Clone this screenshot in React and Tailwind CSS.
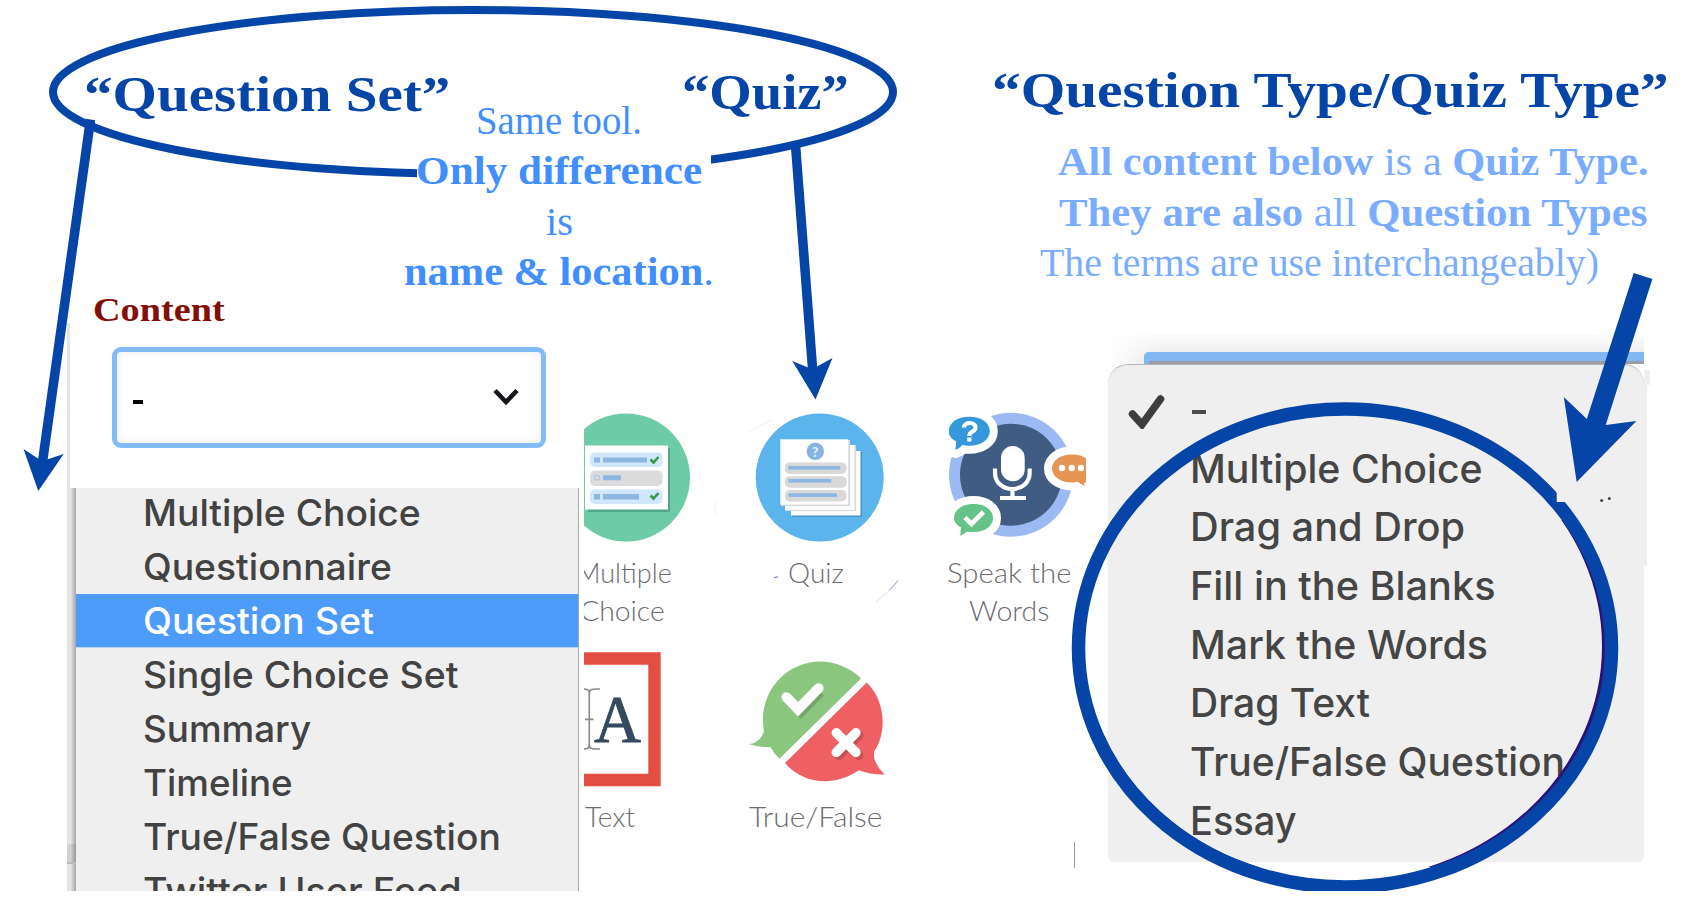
import { useLayoutEffect, useRef, useState } from "react";

// One line of text, stretched or condensed to fill the width of its box.
function Fit({ className = "", children }) {
  const box = useRef(null);
  const text = useRef(null);
  const [scale, setScale] = useState(1);
  useLayoutEffect(() => {
    setScale(box.current.clientWidth / text.current.offsetWidth);
  }, []);
  return (
    <div ref={box} className={`whitespace-nowrap ${className}`}>
      <span ref={text} className="inline-block origin-left" style={{ transform: `scaleX(${scale})` }}>
        {children}
      </span>
    </div>
  );
}

const leftOptions = [
  { label: "Multiple Choice", width: "w-[278px]" },
  { label: "Questionnaire", width: "w-[249px]" },
  { label: "Question Set", width: "w-[231px]", active: true },
  { label: "Single Choice Set", width: "w-[316px]" },
  { label: "Summary", width: "w-[168px]" },
  { label: "Timeline", width: "w-[150px]" },
  { label: "True/False Question", width: "w-[358px]" },
  { label: "Twitter User Feed", width: "w-[319px]" },
];

const rightOptions = [
  { label: "Multiple Choice", width: "w-[293px]" },
  { label: "Drag and Drop", width: "w-[275px]" },
  { label: "Fill in the Blanks", width: "w-[305px]" },
  { label: "Mark the Words", width: "w-[298px]" },
  { label: "Drag Text", width: "w-[180px]" },
  { label: "True/False Question", width: "w-[375px]" },
  { label: "Essay", width: "w-[107px]" },
];

function Header() {
  return (
    <header className="flex h-[290px] items-start font-['Liberation_Serif',serif] text-[#0645a8]">
      <h1 className="mt-[69px] ml-[84px] text-[51px] leading-[50px] font-bold">
        <Fit className="w-[366px]">“Question Set”</Fit>
      </h1>
      <div className="mt-[96px] -ml-[45px] flex w-[308px] flex-col items-center text-[39px] leading-[50.3px] text-[#418eff]">
        <Fit className="w-[166px]">Same tool.</Fit>
        <Fit className="w-[286px] font-bold">Only difference</Fit>
        <Fit className="w-[27px]">is</Fit>
        <Fit className="w-[310px]">
          <b>name &amp; location</b>.
        </Fit>
      </div>
      <h1 className="mt-[67px] -ml-[31px] text-[51px] leading-[50px] font-bold">
        <Fit className="w-[167px]">“Quiz”</Fit>
      </h1>
      <div className="mt-[65px] ml-[143px] w-[676px]">
        <h1 className="text-[51px] leading-[50px] font-bold">
          <Fit className="w-[677px]">“Question Type/Quiz Type”</Fit>
        </h1>
        <div className="mt-[22px] text-[39px] leading-[50.5px] text-[#7aacff]">
          <Fit className="ml-[66px] w-[590px]">
            <b>All content below</b> is a <b>Quiz Type.</b>
          </Fit>
          <Fit className="ml-[67px] w-[588px]">
            <b>They are also</b> all <b>Question Types</b>
          </Fit>
          <Fit className="ml-[48px] w-[559px]">The terms are use interchangeably)</Fit>
        </div>
      </div>
    </header>
  );
}

function ContentPicker() {
  return (
    <section className="w-[584px] shrink-0">
      <h2 className="mt-[3px] ml-[93px] h-[30px] font-['Liberation_Serif',serif] text-[33px] leading-[34px] font-bold text-[#820e05]">
        <Fit className="w-[132px]">Content</Fit>
      </h2>
      <div className="ml-[67px] h-[165px] border-l-[3px] border-[#e4e4e4] pt-[24px] pl-[42px]">
        <div className="flex h-[101px] w-[434px] items-center justify-between rounded-[9px] border-[5px] border-[#82bbfa] pr-[21px] pl-[16px] shadow-[inset_0_0_8px_rgba(0,0,0,0.09)]">
          <span className="mt-[8px] h-[4px] w-[10px] bg-black" />
          <svg className="mb-[2px] h-[18px] w-[28px]" viewBox="0 0 28 18" fill="none">
            <path d="M3 2.500 L14 14 L25 2.500" stroke="#15151c" strokeWidth="4.600" />
          </svg>
        </div>
      </div>
      <div className="ml-[67px] flex h-[403px]">
        <div className="flex w-[9px] flex-col bg-linear-to-r from-[#e4e4e4] from-40% to-[#a6a6a6]">
          <div className="mt-[356px] h-[20px] border-b-2 border-[#b9b9bf] bg-black/8" />
        </div>
        <ul className="-mt-[2px] h-[405px] w-[503px] overflow-hidden border-r border-[#a8a8a8] bg-[#efefef] font-['Inter',sans-serif] text-[37px] font-[450] text-[#424242] [clip-path:inset(2px_0_0_0)]">
          {leftOptions.map((o) => (
            <li
              key={o.label}
              className={
                o.active
                  ? "h-[54px] border-b border-[#b9d7fb] bg-[#4d9cfb] pl-[67px] leading-[53px] text-white"
                  : "h-[54px] pl-[67px] leading-[53px]"
              }
            >
              <Fit className={o.width}>{o.label}</Fit>
            </li>
          ))}
        </ul>
      </div>
    </section>
  );
}

function MultipleChoiceIcon() {
  return (
    <svg className="block h-[140px] w-[110px]" viewBox="584 410 110 140">
      <circle cx="626" cy="477.500" r="64" fill="#6dcba8" />
      <rect x="588" y="448" width="82" height="64" fill="#4fa98a" />
      <rect x="585" y="445.500" width="83" height="64" fill="#fff" />
      <rect x="590" y="452.500" width="72.500" height="14.500" rx="5" fill="#cfe6fb" />
      <rect x="590" y="470.500" width="72.500" height="15.500" rx="5" fill="#dbdbdb" />
      <rect x="590" y="489.500" width="72.500" height="14.500" rx="5" fill="#cfe6fb" />
      <g fill="#8db6e2">
        <rect x="594" y="457.500" width="6" height="5" />
        <rect x="603" y="457.500" width="44" height="5" />
        <rect x="603" y="475.300" width="18" height="5" />
        <rect x="594" y="494" width="6" height="5.500" />
        <rect x="603" y="494" width="36" height="5.500" />
      </g>
      <rect x="594.700" y="475.600" width="4.600" height="4.200" fill="none" stroke="#a9c8e8" />
      <path d="M650.500 459.500l3 3 5-5.500M650.500 495.500l3 3 5-5.500" fill="none" stroke="#3a9a44" strokeWidth="2.600" />
    </svg>
  );
}

function QuizIcon() {
  return (
    <svg className="block h-[140px] w-[140px]" viewBox="746 410 140 140">
      <circle cx="819.700" cy="477.500" r="64" fill="#5cb4ed" />
      <rect x="792" y="452" width="70" height="65" fill="#4693c6" />
      <rect x="791" y="451" width="69.500" height="64.500" fill="#fbfbfb" />
      <rect x="785" y="445" width="71" height="66" fill="#d4d8db" />
      <rect x="785" y="445" width="69.500" height="65" fill="#fbfbfb" />
      <rect x="781" y="440" width="69" height="66" fill="#d4d8db" />
      <rect x="780.300" y="439.300" width="68" height="65.300" fill="#fff" />
      <circle cx="815.300" cy="451.300" r="8.700" fill="#86b4e2" />
      <text x="815.300" y="456.500" textAnchor="middle" fontFamily="Lato, sans-serif" fontWeight="700" fontSize="14" fill="#e8f2fc">?</text>
      <g fill="#d9d9d9">
        <rect x="784.700" y="462.500" width="62" height="11.500" rx="5" />
        <rect x="784.700" y="476.200" width="62" height="11.500" rx="5" />
        <rect x="784.700" y="490" width="62" height="11.500" rx="5" />
      </g>
      <g fill="#8db6e2">
        <rect x="788.300" y="466" width="52" height="3.600" />
        <rect x="788.300" y="479" width="43" height="3.600" />
        <rect x="788.300" y="493.300" width="48.500" height="3.600" />
      </g>
      <path d="M750 432q10-8 22-12" fill="none" stroke="#efeff2" />
    </svg>
  );
}

function SpeakIcon() {
  return (
    <svg className="block h-[140px] w-[146px]" viewBox="940 410 146 140">
      <circle cx="1011" cy="474.700" r="62" fill="#9bb9f3" />
      <circle cx="1011" cy="474.700" r="51" fill="#405c82" />
      <rect x="1001" y="446" width="23.700" height="35.300" rx="11.800" fill="#fff" />
      <path d="M995 468.500v4c0 22 34.700 22 34.700 0v-4M1012.500 489v8M1000 498h26" fill="none" stroke="#fff" strokeWidth="4.200" />
      <g stroke="#fff" strokeWidth="16" strokeLinejoin="round" fill="#fff">
        <path d="M969.300 416.800c12 0 20.500 6 20.500 14.500s-9 14.500-20.500 14.500c-3 0-5-.3-7-.8q-3 4-7 5l1-8.500c-5-2.500-7.500-6-7.500-10.200 0-8.500 8.500-14.500 20.500-14.500z" />
        <path d="M973.500 504c11.500 0 19.500 6 19.500 14s-8 14-19.500 14c-2.500 0-5 0-7-.6q-2.500 3.300-6.300 4.400l.8-8.400c-4.500-2.500-7-5.500-7-9.400 0-8 8-14 19.500-14z" />
        <path d="M1072 454.500c11 0 20 6 20 14 0 3-1.500 6-4 8l-3.500 9.500q-4-2-7-4.200c-2 .4-3.500.7-5.500.7-11.500 0-20-6-20-14s8.500-14 20-14z" />
      </g>
      <path fill="#3598db" d="M969.300 416.800c12 0 20.500 6 20.500 14.500s-9 14.500-20.500 14.500c-3 0-5-.3-7-.8q-3 4-7 5l1-8.500c-5-2.500-7.500-6-7.500-10.200 0-8.500 8.500-14.500 20.500-14.500z" />
      <path fill="#65c289" d="M973.500 504c11.500 0 19.500 6 19.500 14s-8 14-19.500 14c-2.500 0-5 0-7-.6q-2.500 3.300-6.300 4.400l.8-8.400c-4.500-2.500-7-5.500-7-9.400 0-8 8-14 19.500-14z" />
      <path fill="#e59553" d="M1072 454.500c7 0 12 2 15 4.500v23q-1.500.5-3 .8l.6 3.200q-4-2-7-4.200c-2 .4-3.500.7-5.600.7-11.500 0-20-6-20-14s8.500-14 20-14z" />
      <path d="M964 427.500c0-6 11.500-6 11.500.2 0 4.300-6.200 3.300-6.200 8.300M969.300 437.500v4" fill="none" stroke="#fff" strokeWidth="4.200" />
      <path d="M965 517.500l6.500 6.500 12-12" fill="none" stroke="#fff" strokeWidth="4.600" />
      <g fill="#fff">
        <circle cx="1062" cy="468" r="3.200" />
        <circle cx="1071.700" cy="468" r="3.200" />
        <circle cx="1081" cy="468" r="3.200" />
      </g>
    </svg>
  );
}

function TextIcon() {
  return (
    <svg className="block h-[140px] w-[100px]" viewBox="584 650 100 140">
      <path d="M578 658.500h76.500v121.500h-76.500" fill="none" stroke="#e44d42" strokeWidth="12.400" />
      <path d="M582 689c4 0 7.300 0 7.300 4v52c0 4-3.300 4-7.300 4M600 689h-3c-4 0-7.700 0-7.700 4v52c0 4 3.700 4 7.700 4h3M585 719.300h8.500" fill="none" stroke="#8c8c8c" strokeWidth="1.700" />
      <text x="594" y="741.500" fontFamily="'Liberation Serif', serif" fontSize="68" textLength="47" lengthAdjust="spacingAndGlyphs" fill="#34495e" stroke="#34495e" strokeWidth="0.900">A</text>
    </svg>
  );
}

function TrueFalseIcon() {
  return (
    <svg className="block h-[140px] w-[140px]" viewBox="746 650 140 140">
      <path fill="#8bc67f" d="M861 678.500L779.500 758.700Q773.500 753.500 770.500 747Q759 747.500 749.300 744.300Q761 742 764 731C757 692 787 661.500 820 661.500C836 661.500 852 669 861 678.500z" />
      <path fill="#ee6063" d="M866.700 682.500C884 699 888.500 730 874 752V757Q876 766 884.500 774.800Q869 774.500 859 770.300C833 787.500 803 784 785 763z" />
      <path d="M790.500 701l10.500 11.300 19.500-20" fill="none" stroke="#74a66a" strokeWidth="9.500" />
      <path d="M839 735.500l20 20m0-20l-20 20" stroke="#c94f54" strokeWidth="9" strokeLinecap="round" />
      <path d="M786.500 697.200l11.500 12 20.500-21" fill="none" stroke="#fff" strokeWidth="10" strokeLinecap="round" />
      <path d="M836.300 732.800l19.600 19.600m0-19.600l-19.600 19.600" stroke="#fff" strokeWidth="9.500" strokeLinecap="round" />
    </svg>
  );
}

function ToolIcons() {
  return (
    <section className="mt-[120px] grid w-[524px] shrink-0 grid-cols-[162px_194px_168px] content-start font-['Lato',sans-serif] text-[27px] leading-[38px] font-light text-[#6c6c70]">
      <div className="h-[240px] overflow-hidden">
        <MultipleChoiceIcon />
        <div className="mt-[4px]">
          <Fit className="-ml-[8px] w-[96px]">Multiple</Fit>
          <Fit className="-ml-[4px] w-[85px]">Choice</Fit>
        </div>
      </div>
      <div>
        <QuizIcon />
        <Fit className="mt-[4px] ml-[42px] w-[56px]">Quiz</Fit>
      </div>
      <div>
        <SpeakIcon />
        <div className="mt-[4px]">
          <Fit className="ml-[7px] w-[125px]">Speak the</Fit>
          <Fit className="ml-[29px] w-[80px]">Words</Fit>
        </div>
      </div>
      <div>
        <TextIcon />
        <Fit className="mt-[8px] ml-[1px] w-[50px]">Text</Fit>
      </div>
      <div>
        <TrueFalseIcon />
        <Fit className="mt-[8px] ml-[3px] w-[133px]">True/False</Fit>
      </div>
    </section>
  );
}

function QuestionTypeMenu() {
  return (
    <section className="mt-[44px] w-[542px] shrink-0">
      <div className="flex h-[30px] w-[536px] items-end justify-end bg-[linear-gradient(to_right,white,transparent_10%),linear-gradient(#fcfcfc,#e6e6e6)]">
        <div className="h-[12px] w-[500px] rounded-tl-[5px] border-t-[9px] border-l-[5px] border-[#82b8f1] bg-[#999da3]" />
      </div>
      <div className="flex">
        <ul className="h-[498px] w-[536px] rounded-t-[20px] rounded-b-[6px] border-t border-[#b5b5b5] bg-[#efefef] pt-[16px] font-['Inter',sans-serif] text-[39px] font-[450] text-[#454545]">
          <li className="flex h-[58.7px] items-center pl-[20px]">
            <svg className="h-[38px] w-[40px]" viewBox="1128 392 40 38" fill="none">
              <path d="M1132.500 415l9.500 10.500 18.500-25.500" stroke="#3e3e3e" strokeWidth="7.500" strokeLinecap="round" />
            </svg>
            <span className="mt-[3px] ml-[24px] h-[4px] w-[14px] bg-[#4a4a4a]" />
          </li>
          {rightOptions.map((o) => (
            <li key={o.label} className="h-[58.7px] pl-[82px] leading-[57px]">
              <Fit className={o.width}>{o.label}</Fit>
            </li>
          ))}
        </ul>
        <div className="mt-[6px] h-[15px] w-[6px] bg-[#efefef]" />
        <div className="mt-[21px] -ml-[6px] h-[181px] w-[3px] bg-[#efefef]" />
      </div>
    </section>
  );
}

function Annotations() {
  return (
    <svg className="pointer-events-none absolute top-0 left-0 h-[891px] w-[1692px]" viewBox="0 0 1692 891" fill="none">
      <defs>
        <clipPath id="ring">
          <path d="M0 0h1692v140H0zM0 140h417v60H0zM711 140h300v60H711z" />
        </clipPath>
        <clipPath id="inner">
          <path d="M1100 520h520v347h-520z" />
        </clipPath>
      </defs>
      <ellipse cx="473" cy="92" rx="420" ry="82" stroke="#0645a8" strokeWidth="8" clipPath="url(#ring)" />
      <path d="M90.500 119.500L42.500 462" stroke="#0645a8" strokeWidth="9.500" />
      <path d="M38.300 491L23.500 449L38 458.500L47 459.500L63.700 454z" fill="#0645a8" />
      <path d="M795.500 145L812.500 368" stroke="#0645a8" strokeWidth="9.500" />
      <path d="M815.500 399.500L792.300 361L808 367.500L817 366.500L832.500 358z" fill="#0645a8" />
      <ellipse cx="1343" cy="646" rx="261.500" ry="236.500" stroke="#2c1277" strokeWidth="5" clipPath="url(#inner)" />
      <ellipse cx="1345" cy="648" rx="266.500" ry="239" stroke="#0645a8" strokeWidth="13.500" />
      <path d="M1556.700 484h14v18h-14z" fill="#efefef" />
      <path d="M1633.700 273L1652.400 279L1605.700 425L1636.400 421L1576.700 482L1563.800 397L1586.800 419z" fill="#0645a8" />
      <path d="M1074.500 842v26" stroke="#999" />
      <path d="M774 577.500l4-.6" stroke="#5a3f8f" strokeOpacity="0.800" />
      <path d="M876 602Q888 593 898 580.500" stroke="#e2dfec" />
      <path d="M889 590.500Q894 586 898 580.500" stroke="#a49ac8" />
      <path d="M715.300 500v16" stroke="#f2f2f5" />
      <circle cx="1601.700" cy="500.500" r="1.500" fill="#444" />
      <circle cx="1609.300" cy="498.500" r="1.500" fill="#444" />
    </svg>
  );
}

export default function App() {
  return (
    <div className="relative h-[902px] w-[1692px] overflow-hidden bg-white">
      <Header />
      <main className="flex h-[601px] items-start overflow-hidden">
        <ContentPicker />
        <ToolIcons />
        <QuestionTypeMenu />
      </main>
      <Annotations />
    </div>
  );
}
